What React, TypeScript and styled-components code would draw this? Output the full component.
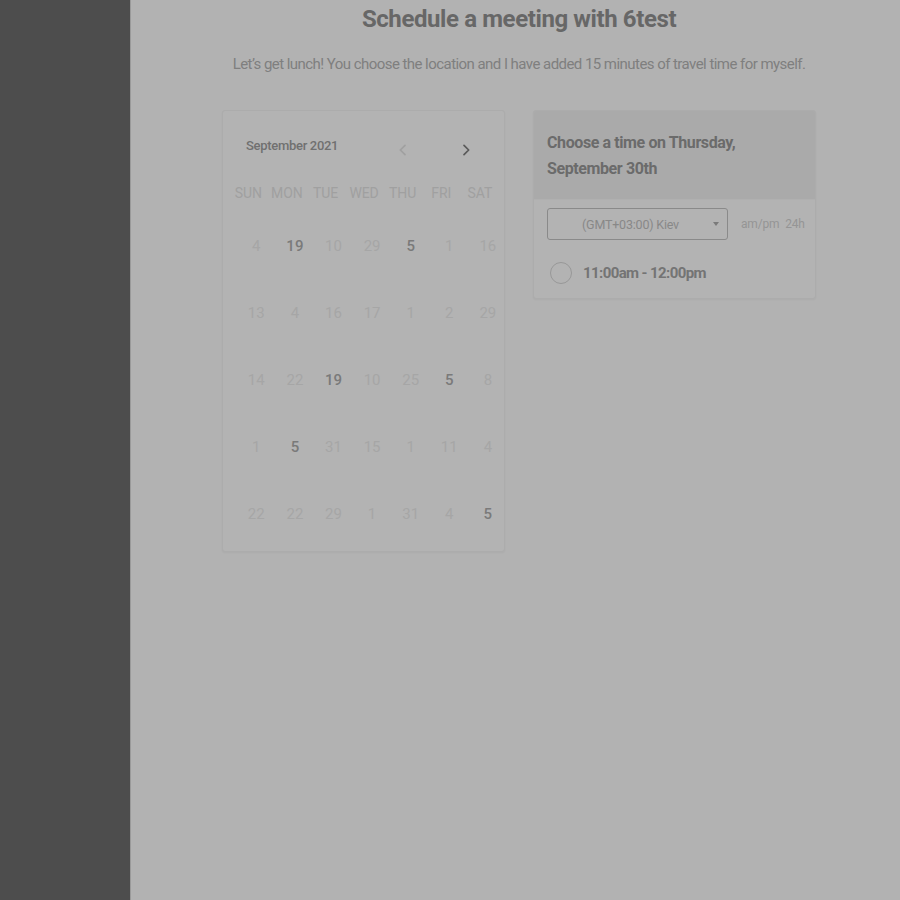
import React from "react";
import styled, { createGlobalStyle } from "styled-components";

const Global = createGlobalStyle`
  html, body { margin: 0; padding: 0; background: #b2b2b2; }
  body { font-family: Roboto, "Noto Sans", sans-serif; }
  * { box-sizing: border-box; }
`;

const Shell = styled.div`
  display: flex;
  min-height: 900px;
  width: 900px;
`;

const Sidebar = styled.aside`
  width: 131px;
  flex: none;
  background: #4d4d4d;
  border-right: 1px solid #9a9a9a;
`;

const Main = styled.main`
  flex: 1;
  display: flex;
  flex-direction: column;
  align-items: center;
  padding: 4px 0 0 7px;
`;

const Title = styled.h1`
  margin: 0;
  font-size: 24px;
  line-height: 30px;
  font-weight: 700;
  color: #676767;
  letter-spacing: -0.4px;
`;

const Subtitle = styled.p`
  margin: 20px 0 0;
  font-size: 15px;
  line-height: 20px;
  font-weight: 400;
  color: #7f7f7f;
  letter-spacing: -0.55px;
`;

const Cards = styled.div`
  display: flex;
  gap: 28px;
  align-items: flex-start;
  margin-top: 36px;
`;

const Card = styled.section`
  width: 283px;
  background: #b3b3b3;
  border: 1px solid #acacac;
  border-radius: 3px;
  box-shadow: 0 1px 2px rgba(0, 0, 0, 0.04);
`;

const CalCard = styled(Card)`
  height: 442px;
  padding: 0 6px;
`;

const CalHead = styled.div`
  display: flex;
  align-items: center;
  height: 70px;
  padding: 0 0 0 17px;
`;

const Month = styled.div`
  font-size: 13px;
  font-weight: 500;
  color: #707070;
  letter-spacing: -0.3px;
  margin-top: -2px;
  flex: 1;
`;

const Nav = styled.button<{ $on?: boolean }>`
  background: none;
  border: 0;
  padding: 0;
  width: 24px;
  height: 24px;
  display: flex;
  align-items: center;
  justify-content: center;
  margin-top: 7px;
  color: ${(p) => (p.$on ? "#5a5a5a" : "#a0a0a0")};
`;

const NavGap = styled.div`
  width: 39px;
`;

const NavEnd = styled.div`
  width: 20px;
`;

const Grid = styled.div<{ $shift?: number }>`
  display: grid;
  grid-template-columns: repeat(7, 38.6px);
  padding-left: ${(p) => p.$shift || 0}px;
`;

const DayName = styled.div`
  text-align: center;
  font-size: 14px;
  line-height: 20px;
  color: #a0a0a0;
  letter-spacing: -0.1px;
  height: 20px;
  margin-top: 2px;
`;

const Day = styled.div<{ $bold?: boolean }>`
  height: 67px;
  display: flex;
  align-items: center;
  justify-content: center;
  font-size: 15px;
  font-weight: ${(p) => (p.$bold ? 500 : 400)};
  color: ${(p) => (p.$bold ? "#7a7a7a" : "#a6a6a6")};
`;

const DaysWrap = styled.div`
  margin-top: 9px;
`;

const TimeCard = styled(Card)`
  height: 189px;
  overflow: hidden;
`;

const TimeHead = styled.div`
  background: #aaaaaa;
  height: 88px;
  padding: 19px 13px 0;
  font-size: 16px;
  line-height: 26px;
  font-weight: 700;
  color: #6b6b6b;
  letter-spacing: -0.4px;
`;

const Controls = styled.div`
  display: flex;
  align-items: center;
  padding: 0 13px 0 13px;
  height: 49px;
  border-top: 1px solid #b0b0b0;
`;

const Select = styled.div`
  flex: none;
  width: 181px;
  height: 32px;
  border: 1px solid #8a8a8a;
  border-radius: 3px;
  display: flex;
  align-items: center;
  padding: 0 8px 0 34px;
  font-size: 12.5px;
  letter-spacing: -0.2px;
  color: #888888;
`;

const SelectText = styled.span`
  flex: 1;
`;

const Caret = styled.span`
  width: 0;
  height: 0;
  border-left: 3px solid transparent;
  border-right: 3px solid transparent;
  border-top: 4px solid #7a7a7a;
`;

const Toggle = styled.div`
  margin-left: 13px;
  font-size: 12px;
  color: #959595;
  display: flex;
  gap: 6px;
  letter-spacing: -0.2px;
`;

const Slot = styled.div`
  display: flex;
  align-items: center;
  gap: 11px;
  padding: 0 15px 0 16px;
  height: 50px;
`;

const Radio = styled.span`
  width: 22px;
  height: 22px;
  border-radius: 50%;
  border: 1.5px solid #989898;
`;

const SlotText = styled.span`
  font-size: 15px;
  font-weight: 700;
  color: #747474;
  letter-spacing: -0.6px;
`;

const Chevron = ({ dir }: { dir: "l" | "r" }) => (
  <svg width="16" height="16" viewBox="0 0 24 24" fill="none" stroke="currentColor" strokeWidth="2.6" strokeLinecap="round" strokeLinejoin="round">
    {dir === "l" ? <path d="M15 5l-7 7 7 7" /> : <path d="M9 5l7 7-7 7" />}
  </svg>
);

const names = ["SUN", "MON", "TUE", "WED", "THU", "FRI", "SAT"];
const rows: [number, boolean][][] = [
  [[4, false], [19, true], [10, false], [29, false], [5, true], [1, false], [16, false]],
  [[13, false], [4, false], [16, false], [17, false], [1, false], [2, false], [29, false]],
  [[14, false], [22, false], [19, true], [10, false], [25, false], [5, true], [8, false]],
  [[1, false], [5, true], [31, false], [15, false], [1, false], [11, false], [4, false]],
  [[22, false], [22, false], [29, false], [1, false], [31, false], [4, false], [5, true]],
];

export default function App() {
  return (
    <>
      <Global />
      <Shell>
        <Sidebar />
        <Main>
          <Title>Schedule a meeting with 6test</Title>
          <Subtitle>
            Let’s get lunch! You choose the location and I have added 15 minutes of travel time for myself.
          </Subtitle>
          <Cards>
            <CalCard>
              <CalHead>
                <Month>September 2021</Month>
                <Nav aria-label="previous">
                  <Chevron dir="l" />
                </Nav>
                <NavGap />
                <Nav $on aria-label="next">
                  <Chevron dir="r" />
                </Nav>
                <NavEnd />
              </CalHead>
              <Grid>
                {names.map((n) => (
                  <DayName key={n}>{n}</DayName>
                ))}
              </Grid>
              <DaysWrap>
                <Grid $shift={8}>
                  {rows.flat().map(([d, b], i) => (
                    <Day key={i} $bold={b}>
                      {d}
                    </Day>
                  ))}
                </Grid>
              </DaysWrap>
            </CalCard>
            <TimeCard>
              <TimeHead>
                Choose a time on Thursday,
                <br />
                September 30th
              </TimeHead>
              <Controls>
                <Select>
                  <SelectText>(GMT+03:00) Kiev</SelectText>
                  <Caret />
                </Select>
                <Toggle>
                  <span>am/pm</span>
                  <span>24h</span>
                </Toggle>
              </Controls>
              <Slot>
                <Radio />
                <SlotText>11:00am - 12:00pm</SlotText>
              </Slot>
            </TimeCard>
          </Cards>
        </Main>
      </Shell>
    </>
  );
}
